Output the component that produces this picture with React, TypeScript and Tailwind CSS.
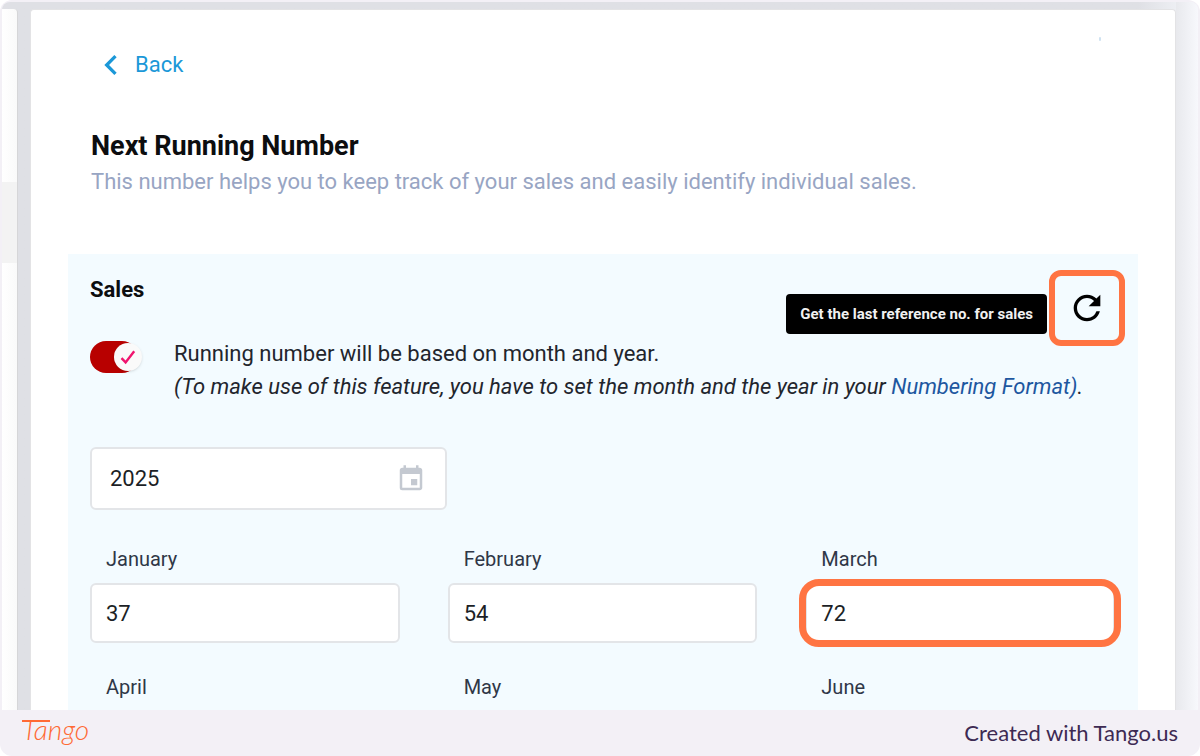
import { useState } from "react";
import { MdChevronLeft, MdEvent, MdRefresh } from "react-icons/md";

type Month = { name: string; value?: string; highlighted?: boolean };

const months: Month[] = [
  { name: "January", value: "37" },
  { name: "February", value: "54" },
  { name: "March", value: "72", highlighted: true },
  { name: "April" },
  { name: "May" },
  { name: "June" },
];

function MonthField({ name, value, highlighted }: Month) {
  const id = `month-${name.toLowerCase()}`;
  if (value === undefined) {
    return <p className="pl-4 text-xl leading-7 text-[#2f3747]">{name}</p>;
  }
  return (
    <div>
      <label htmlFor={id} className="block pl-4 text-xl leading-7 text-[#2f3747]">
        {name}
      </label>
      <div className="relative mt-2.5">
        <input
          id={id}
          defaultValue={value}
          className="block h-[60px] w-full rounded-md border-2 border-[#e3e5e8] bg-white px-3.5 text-[22px] text-[#1c1f26] outline-none"
        />
        {highlighted && (
          <span className="pointer-events-none absolute -inset-x-1.5 -inset-y-1 rounded-[20px] border-[7px] border-[#ff7442]" />
        )}
      </div>
    </div>
  );
}

function Toggle() {
  const [on, setOn] = useState(true);
  return (
    <label className="relative mt-1 block h-8 w-[52px] shrink-0">
      <input
        type="checkbox"
        checked={on}
        onChange={() => setOn(!on)}
        aria-label="Running number by month and year"
        className="peer absolute inset-0 m-0 cursor-pointer opacity-0"
      />
      <span className="block h-8 w-12 rounded-full bg-gray-400 peer-checked:bg-[#b80000]" />
      <span className="absolute top-0.5 right-0 flex size-7 items-center justify-center rounded-full bg-[#fafafa] shadow">
        <svg viewBox="0 0 16 16" className="size-4" fill="none" stroke="#f0146e" strokeWidth="2.4">
          <path d="M1.5 9.2 5.6 13.4 14.2 2.2" />
        </svg>
      </span>
    </label>
  );
}

export default function App() {
  return (
    <div className="min-h-screen bg-white font-['Roboto',sans-serif]">
      <div className="flex min-h-screen flex-col overflow-hidden rounded-xl bg-[#f3f0f6]">
        <div className="mx-0.5 mt-0.5 flex flex-1 overflow-hidden rounded-t-lg bg-linear-to-r from-[#dfe0e5] from-95% to-[#f5f7fb]">
          <div className="mt-[7px] w-4 shrink-0 rounded-tr border-r border-[#d6d6d8] bg-linear-to-r from-white to-[#fafafa] pt-[173px]">
            <div className="h-[81px] bg-[#f3f3f3]" />
          </div>
          <main className="mt-[7px] ml-3 flex min-w-0 flex-1 flex-col rounded-t border border-b-0 border-[#e3e3e5] bg-white">
            <header className="px-[60px] pt-[27px]">
              <div className="flex justify-between pr-[14px]">
                <a href="#back" className="mt-2 flex items-center gap-1 text-[22px] leading-10 text-[#1b98d8]">
                  <MdChevronLeft className="size-10" />
                  Back
                </a>
                <span className="h-1 w-0.5 rounded-full bg-[#cfe2f1]" />
              </div>
              <h1 className="mt-[43px] text-[27px] leading-9 font-bold text-[#0c0d0f]">Next Running Number</h1>
              <p className="text-[22px] leading-9 text-[#98a5c3]">
                This number helps you to keep track of your sales and easily identify individual sales.
              </p>
            </header>

            <section className="mx-[37px] mt-[54px] flex-1 bg-[#f3fbff] pt-[30px] pr-[23px] pb-[7px] pl-[22px]">
              <div className="flex h-12 pr-1">
                <h2 className="-mt-2 flex-1 text-[22px] leading-7 font-bold text-[#0c0d0f]">Sales</h2>
                <div className="mt-2.5 mr-4 h-10 rounded bg-black px-3.5 text-[15px] leading-10 font-bold whitespace-nowrap text-[#f1f1f1]">
                  Get the last reference no. for sales
                </div>
                <button type="button" aria-label="Refresh" className="relative flex size-12 items-center justify-center text-black">
                  <MdRefresh className="size-10" />
                  <span className="pointer-events-none absolute -inset-3.5 rounded-xl border-6 border-[#ff7442]" />
                </button>
              </div>

              <div className="mt-[5px] flex gap-8">
                <Toggle />
                <div className="min-w-0 text-[22px] leading-[33px] text-[#22252d]">
                  <p>Running number will be based on month and year.</p>
                  <p className="whitespace-nowrap italic">
                    (To make use of this feature, you have to set the month and the year in your{" "}
                    <a href="#format" className="text-[#1e57a0]">
                      Numbering Format
                    </a>
                    <span className="text-[#1e57a0]">)</span>.
                  </p>
                </div>
              </div>

              <div className="relative mt-11 w-[357px]">
                <input
                  aria-label="Year"
                  defaultValue="2025"
                  className="block h-[63px] w-full rounded-md border-2 border-[#e3e5e8] bg-white pr-14 pl-[18px] text-[22px] text-[#1c1f26] outline-none"
                />
                <MdEvent className="pointer-events-none absolute top-[17px] right-[21px] size-[30px] text-[#c4c9d1]" />
              </div>

              <div className="mt-[35px] grid grid-cols-3 gap-x-12 gap-y-[30px]">
                {months.map((month) => (
                  <MonthField key={month.name} {...month} />
                ))}
              </div>
            </section>
          </main>
          <div className="w-[22px] shrink-0 bg-linear-to-r from-[#e8e9ed] to-[#f7f8fc]" />
        </div>

        <footer className="flex h-[46px] items-center justify-between px-[22px] font-['Lato',sans-serif]">
          <span className="relative mb-2 text-[28px] leading-8 font-light text-[#ff6a35] italic">
            Tango
            <span className="absolute top-[7px] left-0 h-0.5 w-7 bg-[#ff6a35]" />
          </span>
          <span className="text-[22px] leading-8 text-[#3d2a53]">Created with Tango.us</span>
        </footer>
      </div>
    </div>
  );
}
